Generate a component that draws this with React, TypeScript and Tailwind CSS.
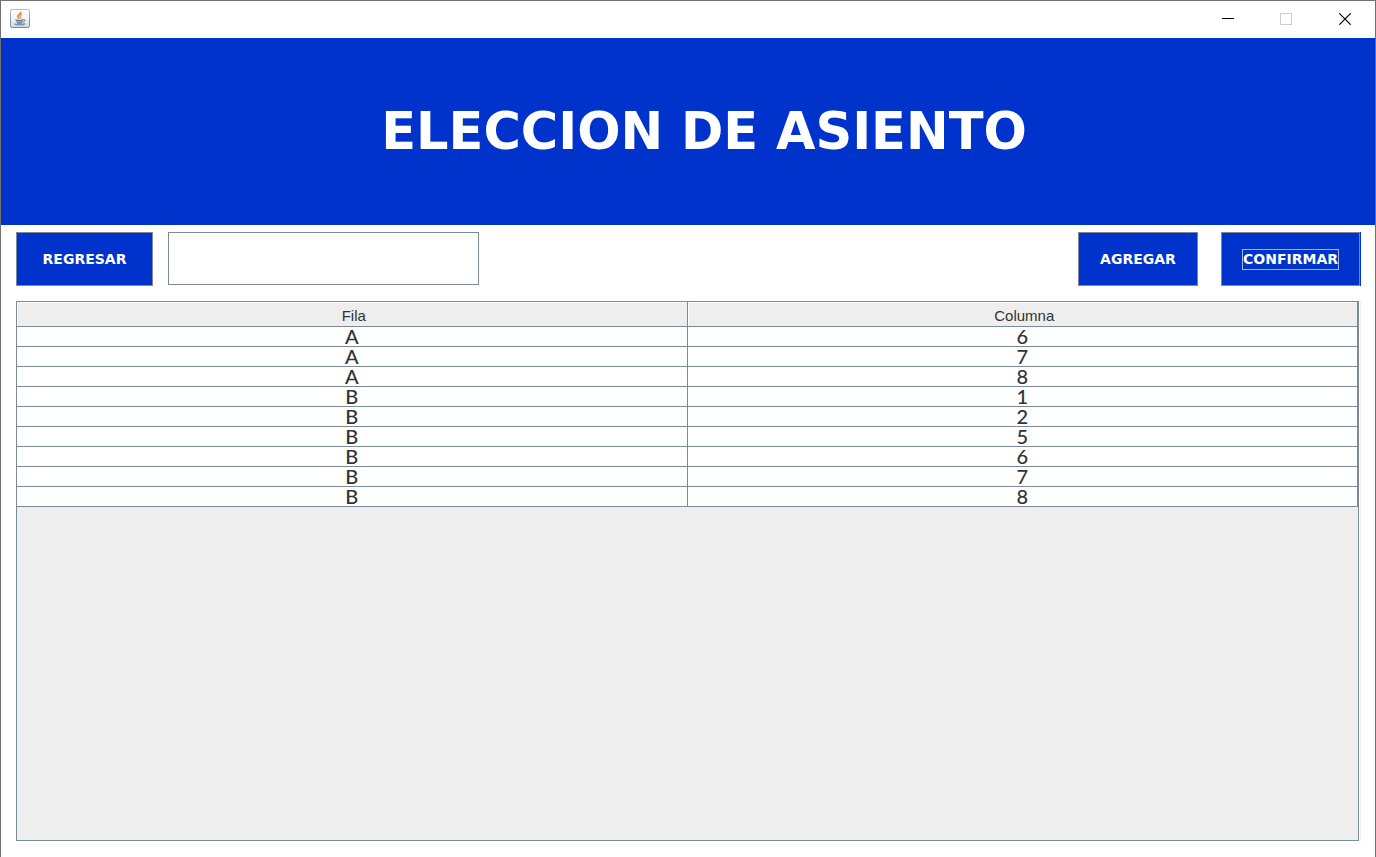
import React from 'react';

type Seat = { row: string; column: number };

const seats: Seat[] = [
  { row: 'A', column: 6 },
  { row: 'A', column: 7 },
  { row: 'A', column: 8 },
  { row: 'B', column: 1 },
  { row: 'B', column: 2 },
  { row: 'B', column: 5 },
  { row: 'B', column: 6 },
  { row: 'B', column: 7 },
  { row: 'B', column: 8 },
];

const actionClass =
  "flex h-[54px] items-center justify-center border border-[#7a8a99] bg-[#0033cc] font-['DejaVu_Sans',sans-serif] text-sm leading-5 font-bold text-white";

function JavaIcon() {
  return (
    <svg width="20" height="20" viewBox="0 0 20 20" aria-hidden="true">
      <defs>
        <linearGradient id="tile" x1="0" y1="0" x2="0" y2="1">
          <stop offset="0" stopColor="#ffffff" />
          <stop offset="0.5" stopColor="#f2f4f6" />
          <stop offset="1" stopColor="#cfd9e0" />
        </linearGradient>
        <linearGradient id="edge" x1="0" y1="0" x2="0" y2="1">
          <stop offset="0" stopColor="#b4babf" />
          <stop offset="1" stopColor="#6d8799" />
        </linearGradient>
      </defs>
      <rect x="0.5" y="0.5" width="19" height="18" rx="1.8" fill="url(#tile)" stroke="url(#edge)" />
      <path d="M10.8 2.8c.8 2-3 2.900-3 4.700 0 1 .9 1.500 1.400 2.200" fill="none" stroke="#e9822f" strokeWidth="1.700" />
      <path d="M12.200 5.200c-2.200.9-2.500 1.700-1.700 2.600.5.700.3 1.200-.3 1.800" fill="none" stroke="#ee9a50" strokeWidth="1.300" />
      <path d="M5.500 10.600c2 .8 5.800.8 7.600 0l-.7 2.900c-1.400.8-4.400.8-5.700 0z" fill="#8facc0" />
      <path d="M5.500 10.700c2 .8 6 .8 7.800 0M6.800 13.600c1.500.6 4 .6 5.500 0" fill="none" stroke="#527d9c" strokeWidth="1.200" />
      <path d="M13.300 10.600c2.300-.6 2.300 1.900-.5 2.500" fill="none" stroke="#527d9c" strokeWidth="1" />
      <path d="M4.300 14.800c1.800 1.500 8.500 1.400 10.700-.2" fill="none" stroke="#6b90a8" strokeWidth="1.300" />
    </svg>
  );
}

function TitleBar() {
  return (
    <header className="flex h-[37px] items-center justify-between bg-white pb-0.5 pl-[9px]">
      <JavaIcon />
      <div className="flex h-full">
        <button type="button" aria-label="Minimizar" className="grid w-[58px] place-items-center">
          <svg width="12" height="12" viewBox="0 0 12 12" shapeRendering="crispEdges">
            <path d="M0 5.500h12" stroke="#000" />
          </svg>
        </button>
        <button type="button" aria-label="Maximizar" disabled className="grid w-[58px] place-items-center">
          <svg width="12" height="12" viewBox="0 0 12 12" shapeRendering="crispEdges">
            <path d="M.5.500h11v11H.5z" fill="none" stroke="#ccc" />
          </svg>
        </button>
        <button type="button" aria-label="Cerrar" className="grid w-[60px] place-items-center">
          <svg width="12" height="12" viewBox="0 0 12 12">
            <path d="M.3.300l11.400 11.400M11.700.300L.3 11.700" stroke="#000" strokeWidth="1.200" />
          </svg>
        </button>
      </div>
    </header>
  );
}

function SeatTable() {
  return (
    <div className="mr-4 ml-[15px] flex-1 border border-[#7a8a99] bg-[#eeeeee] shadow-[1px_0_0_#ffffff,2px_0_0_#eeeeee]">
      <table className="w-full table-fixed border-separate border-spacing-0 text-center text-[#333333]">
        <thead>
          <tr className="font-['Liberation_Sans',Arial,sans-serif] text-[15px] leading-5">
            <th scope="col" className="h-[25px] border-r border-b border-[#7a8a99] p-0 pt-1 pl-1 font-normal shadow-[inset_1px_1px_0_#ffffff]">
              Fila
            </th>
            <th scope="col" className="h-[25px] border-r border-b border-[#7a8a99] p-0 pt-1 pl-1 font-normal shadow-[inset_1px_1px_0_#ffffff]">
              Columna
            </th>
          </tr>
        </thead>
        <tbody className="bg-white font-['Lato',sans-serif] text-xl leading-[19px] font-medium">
          {seats.map((seat) => (
            <tr key={`${seat.row}${seat.column}`}>
              <td className="h-5 border-r border-b border-[#7a8a99] p-0">{seat.row}</td>
              <td className="h-5 border-r border-b border-[#7a8a99] p-0">{seat.column}</td>
            </tr>
          ))}
        </tbody>
      </table>
    </div>
  );
}

export default function App() {
  return (
    <div className="flex min-h-screen flex-col border-x border-t border-[#707070] bg-white pb-4">
      <TitleBar />
      <div className="flex h-[187px] items-center justify-center bg-[#0033cc] pl-8">
        <h1 className="font-['DejaVu_Sans',sans-serif] text-[51px] leading-[60px] font-bold text-white">
          ELECCION DE ASIENTO
        </h1>
      </div>
      <main className="flex flex-1 flex-col">
        <div className="flex items-start px-[15px] pt-[7px] pb-[15px]">
          <button type="button" className={`${actionClass} w-[137px]`}>
            REGRESAR
          </button>
          <input
            type="text"
            aria-label="Asiento"
            className="ml-[15px] h-[53px] w-[311px] border border-[#7a8a99] bg-white px-2 font-['Lato',sans-serif] text-xl text-[#333333] outline-none"
          />
          <button type="button" className={`${actionClass} mr-[23px] ml-auto w-[120px]`}>
            AGREGAR
          </button>
          <button type="button" className={`${actionClass} w-[139px] shadow-[1px_0_0_#0033cc]`}>
            <span className="border border-[#a3b8cc] leading-[19px]">CONFIRMAR</span>
          </button>
        </div>
        <SeatTable />
      </main>
    </div>
  );
}
